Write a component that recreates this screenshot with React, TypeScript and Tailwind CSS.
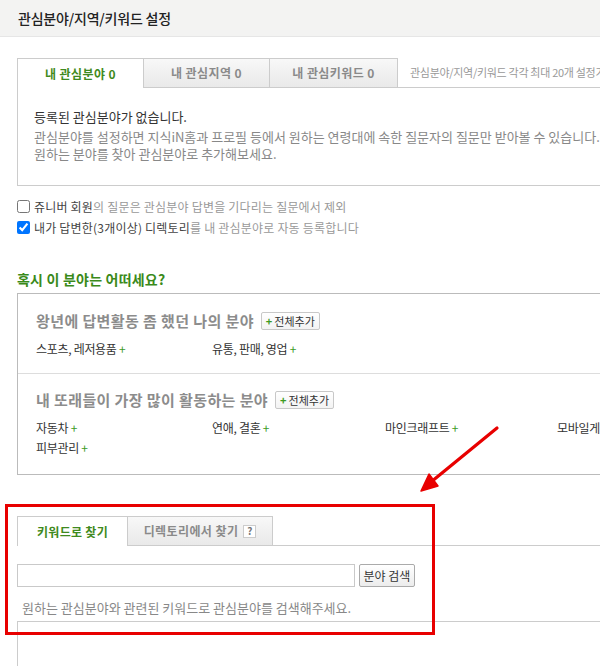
import React from 'react';

const FONT = "font-['Noto_Sans_CJK_KR','Noto_Sans',sans-serif]";

function AddAllButton() {
  return (
    <span className="ml-[7px] inline-flex h-[18px] items-center gap-[2px] rounded-[2px] border border-[#c8c8c8] bg-gradient-to-b from-white to-[#f3f3f3] px-[4px] text-[11px] font-normal leading-none tracking-normal text-[#333]">
      <span className="text-[11px] font-bold text-[#3c9a1e]">+</span>
      전체추가
    </span>
  );
}

function Field({ label }: { label: string }) {
  return (
    <span className="text-[12px] tracking-[-0.3px] text-[#333]">
      {label} <span className="text-[#3c9a1e]">+</span>
    </span>
  );
}

export default function App() {
  const pastFields = ['스포츠, 레저용품', '유통, 판매, 영업'];
  const peerFields = ['자동차', '연애, 결혼', '마인크래프트', '모바일게임', '피부관리'];

  return (
    <div className={`relative h-[666px] w-[600px] overflow-hidden bg-white ${FONT}`}>
      <div className="flex h-[37px] items-center border-b border-[#e6e6e6] bg-[#f3f3f2] pl-[18px] text-[14px] font-medium tracking-[-0.2px] text-[#222]">
        관심분야/지역/키워드 설정
      </div>

      <div className="w-[720px] pl-[17px]">
        {/* tabs */}
        <div className="mt-[21px] flex h-[30px]">
          <div className="flex w-[127px] items-center justify-center border border-b-0 border-[#ccc] bg-white text-[12px] font-bold tracking-[0.4px] text-[#3f8a20]">
            내 관심분야 0
          </div>
          <div className="flex w-[126px] items-center justify-center border-y border-r border-[#ccc] bg-gradient-to-b from-[#f8f8f8] to-[#e9e9e9] text-[12px] font-bold tracking-[0.4px] text-[#8a8a8a]">
            내 관심지역 0
          </div>
          <div className="flex w-[128px] items-center justify-center border-y border-r border-[#ccc] bg-gradient-to-b from-[#f8f8f8] to-[#e9e9e9] text-[12px] font-bold tracking-[0.4px] text-[#8a8a8a]">
            내 관심키워드 0
          </div>
          <div className="flex flex-1 items-center border-b border-[#ccc] pl-[12px] text-[11px] tracking-[-0.3px] text-[#999]">
            관심분야/지역/키워드 각각 최대 20개 설정가능
          </div>
        </div>

        <div className="flex h-[98px] flex-col border-b border-l border-[#ccc] pl-[16px] pt-[20px] text-[13px]">
          <p className="mb-[3px] leading-[17px] text-[#333]">등록된 관심분야가 없습니다.</p>
          <p className="whitespace-nowrap leading-[17px] text-[#888]">
            관심분야를 설정하면 지식iN홈과 프로필 등에서 원하는 연령대에 속한 질문자의 질문만 받아볼 수 있습니다.
          </p>
          <p className="leading-[17px] text-[#888]">원하는 분야를 찾아 관심분야로 추가해보세요.</p>
        </div>

        {/* options */}
        <div className="mt-[10px] flex flex-col">
          <label className="flex h-[21px] items-center gap-[4px] text-[12px] tracking-[0.2px] text-[#999]">
            <input type="checkbox" className="m-0 h-[13px] w-[13px]" />
            <span>
              <span className="text-[#444]">쥬니버 회원</span>의 질문은 관심분야 답변을 기다리는 질문에서 제외
            </span>
          </label>
          <label className="flex h-[21px] items-center gap-[4px] text-[12px] tracking-[0.2px] text-[#999]">
            <input type="checkbox" defaultChecked className="m-0 h-[13px] w-[13px]" />
            <span>
              <span className="text-[#444]">내가 답변한(3개이상) 디렉토리</span>를 내 관심분야로 자동 등록합니다
            </span>
          </label>
        </div>

        <h2 className="mt-[31px] text-[14px] font-bold leading-[20px] tracking-[0.2px] text-[#3a8a1a]">혹시 이 분야는 어떠세요?</h2>

        <div className="mt-[4px] border-y border-l border-[#bbb]">
          <div className="border-b border-[#ddd] pb-[15px] pl-[18px] pt-[17px]">
            <div className="flex h-[20px] items-center text-[15px] font-bold tracking-[0.4px] text-[#8c8c8c]">
              왕년에 답변활동 좀 했던 나의 분야
              <AddAllButton />
            </div>
            <div className="mt-[9px] grid grid-cols-[176px_176px] leading-[18px]">
              {pastFields.map(f => (
                <Field key={f} label={f} />
              ))}
            </div>
          </div>
          <div className="pb-[16px] pl-[18px] pt-[16px]">
            <div className="flex h-[20px] items-center text-[15px] font-bold tracking-[0.4px] text-[#8c8c8c]">
              내 또래들이 가장 많이 활동하는 분야
              <AddAllButton />
            </div>
            <div className="mt-[8px] grid grid-cols-[176px_173px_172px_176px] leading-[20px]">
              {peerFields.map(f => (
                <Field key={f} label={f} />
              ))}
            </div>
          </div>
        </div>

        {/* search tabs */}
        <div className="mt-[41px] flex h-[30px]">
          <div className="flex w-[111px] items-center justify-center border border-b-0 border-[#ccc] bg-white text-[12px] font-bold tracking-[0.3px] text-[#3f8a20]">
            키워드로 찾기
          </div>
          <div className="flex w-[145px] items-center justify-center gap-[5px] border-y border-r border-[#ccc] bg-gradient-to-b from-[#f8f8f8] to-[#e9e9e9] text-[12px] font-bold tracking-[0.4px] text-[#8a8a8a]">
            디렉토리에서 찾기
            <span className="flex h-[13px] w-[13px] items-center justify-center border border-[#ccc] bg-white text-[10px] font-bold leading-none tracking-normal text-[#777]">
              ?
            </span>
          </div>
          <div className="flex-1 border-b border-[#ccc]" />
        </div>

        <div className="mt-[18px] flex items-center gap-[4px]">
          <input type="text" className="h-[23px] w-[338px] border border-[#c9c9c9] bg-white px-[4px] text-[12px] outline-none" />
          <button className="h-[23px] w-[56px] rounded-[2px] border border-[#aaa] bg-gradient-to-b from-white to-[#ececec] text-[12px] text-[#333]">
            분야 검색
          </button>
        </div>

        <p className="mt-[12px] pl-[5px] text-[13px] leading-[18px] text-[#888]">
          원하는 관심분야와 관련된 키워드로 관심분야를 검색해주세요.
        </p>

        <div className="mt-[4px] h-[60px] border-l border-t border-[#ccc]" />
      </div>

      {/* annotation overlays */}
      <div className="pointer-events-none absolute left-[5px] top-[504px] h-[131px] w-[430px] border-[3px] border-[#e80000]" />
      <svg className="pointer-events-none absolute left-0 top-0" width="600" height="666" viewBox="0 0 600 666">
        <line x1="497" y1="428" x2="431" y2="482" stroke="#e80000" strokeWidth="3.2" strokeLinecap="round" />
        <polygon points="421,491 438,486 429,474" fill="#e80000" stroke="#e80000" strokeWidth="1.5" strokeLinejoin="round" />
      </svg>
    </div>
  );
}
